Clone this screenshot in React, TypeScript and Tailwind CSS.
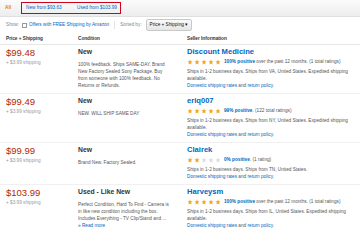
const rows = [
  {
    price: "$99.48",
    ship: "+ $3.99 shipping",
    cond: "New",
    desc: "100% feedback. Ships SAME-DAY. Brand New Factory Sealed Sony Package. Buy from someone with 100% feedback. No Returns or Refunds.",
    seller: "Discount Medicine",
    stars: 5,
    pos: "100% positive",
    rest: " over the past 12 months. (1 total ratings)",
    ships: "Ships in 1-2 business days. Ships from VA, United States. Expedited shipping available.",
    more: false,
  },
  {
    price: "$99.49",
    ship: "+ $3.99 shipping",
    cond: "New",
    desc: "NEW. WILL SHIP SAME DAY",
    seller: "eriq007",
    stars: 5,
    pos: "99% positive",
    rest: ". (122 total ratings)",
    ships: "Ships in 1-2 business days. Ships from NY, United States. Expedited shipping available.",
    more: false,
  },
  {
    price: "$99.99",
    ship: "+ $3.99 shipping",
    cond: "New",
    desc: "Brand New. Factory Sealed.",
    seller: "Clairek",
    stars: 2,
    pos: "0% positive",
    rest: ". (1 rating)",
    ships: "Ships in 1-2 business days. Ships from TN, United States.",
    more: false,
  },
  {
    price: "$103.99",
    ship: "+ $3.99 shipping",
    cond: "Used - Like New",
    desc: "Perfect Condition, Hard To Find - Camera is in like new condition including the box. Includes Everything - TV Clip/Stand and ...",
    seller: "Harveysm",
    stars: 5,
    pos: "100% positive",
    rest: " over the past 12 months. (1 total ratings)",
    ships: "Ships in 1-2 business days. Ships from IL, United States. Expedited shipping available.",
    more: true,
  },
];

const Stars = ({ n }: { n: number }) => (
  <span className="inline-flex gap-[1px] mr-[3px]">
    {[0, 1, 2, 3, 4].map((i) => (
      <svg key={i} width="6" height="6" viewBox="0 0 24 24">
        <path
          d="M12 2l2.9 6.9 7.1.6-5.4 4.7 1.7 7.3L12 17.8 5.7 21.5l1.7-7.3L2 9.5l7.1-.6z"
          fill={i < n ? "#f4a41c" : "#dcdcdc"}
        />
      </svg>
    ))}
  </span>
);

const App = () => {
  return (
    <div className="w-[360px] h-[250px] bg-white overflow-hidden font-['Liberation_Sans',Arial,sans-serif] text-[#333]">
      {/* tabs */}
      <div className="flex items-center h-[17px] bg-gradient-to-b from-[#fbfbfb] to-[#ededed] border-b border-[#e0e0e0] pl-[5px]">
        <span className="text-[4.7px] font-bold text-[#e47911] w-[16px]">All</span>
        <div className="flex items-center h-[12px] w-[100px] border-[1.5px] border-[#d0021b] pl-[4px] whitespace-nowrap overflow-hidden">
          <span className="text-[4.7px] text-[#0066c0] w-[51px]">New from $93.63</span>
          <span className="text-[4.7px] text-[#0066c0]">Used from $103.99</span>
        </div>
      </div>

      {/* filters */}
      <div className="flex items-center h-[16px] pl-[6px] text-[4.7px] whitespace-nowrap">
        <span className="text-[#888] mr-[3px]">Show:</span>
        <span className="w-[5px] h-[5px] border border-[#999] bg-white mr-[2px]" />
        <span className="text-[#0066c0]">Offers with FREE Shipping by Amazon</span>
        <span className="w-px h-[8px] bg-[#e3e3e3] mx-[5px]" />
        <span className="text-[#888] mr-[4px]">Sorted by:</span>
        <span className="px-[3px] py-[1.5px] border border-[#c8c8c8] rounded-[2px] bg-gradient-to-b from-[#fafafa] to-[#e6e6e6] text-[#111]">
          Price + Shipping ▾
        </span>
      </div>

      {/* header */}
      <div className="flex h-[12px] items-center border-b border-[#e7e7e7] text-[4.7px] font-bold text-[#333]">
        <div className="w-[78px] pl-[6px]">Price + Shipping</div>
        <div className="w-[109px]">Condition</div>
        <div className="flex-1">Seller Information</div>
      </div>

      {rows.map((r, i) => (
        <div key={i} className="flex pt-[2px] pb-[4px] border-b border-[#f0f0f0] last:border-b-0">
          <div className="w-[78px] pl-[6px]">
            <div className="text-[9.5px] leading-[12px] text-[#b12704]">{r.price}</div>
            <div className="text-[4.7px] leading-[7px] text-[#999]">{r.ship}</div>
          </div>
          <div className="w-[94px] mr-[15px]">
            <div className="text-[6.8px] leading-[10px] font-bold text-[#333] mb-[4px]">{r.cond}</div>
            <div className="text-[4.7px] leading-[7px] text-[#555]">{r.desc}</div>
            {r.more && <div className="text-[4.7px] leading-[7px] text-[#0066c0]">» Read more</div>}
          </div>
          <div className="flex-1 pr-[5px]">
            <div className="text-[7.6px] leading-[10px] font-bold text-[#0066c0]">{r.seller}</div>
            <div className="flex items-center h-[10px] text-[4.7px] text-[#555] whitespace-nowrap">
              <Stars n={r.stars} />
              <span>
                <b className="text-[#0066c0]">{r.pos}</b>
                {r.rest}
              </span>
            </div>
            <div className="text-[4.7px] leading-[7px] text-[#555] mt-[1px]">{r.ships}</div>
            <div className="text-[4.7px] leading-[7px] text-[#555]">
              <span className="text-[#0066c0]">Domestic shipping rates</span> and{" "}
              <span className="text-[#0066c0]">return policy</span>.
            </div>
          </div>
        </div>
      ))}
    </div>
  );
};

export default App;
